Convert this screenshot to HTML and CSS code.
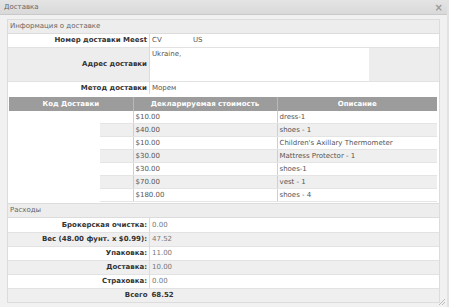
FILE: index.html
```html
<!DOCTYPE html>
<html lang="ru">
<head>
    <meta charset="UTF-8">
    <title>Доставка</title>
    <link rel="stylesheet" href="styles.css">
</head>
<body>
    <div class="dialog">
        <div class="titlebar">
            <span class="title">Доставка</span>
            <span class="close">&#215;</span>
        </div>
        <div class="content">
            <div class="panel">
                <div class="legend">Информация о доставке</div>
                <table class="info">
                    <tr class="row-num">
                        <th>Номер доставки Meest</th>
                        <td><span class="cv">CV</span>US</td>
                    </tr>
                    <tr class="row-addr">
                        <th>Адрес доставки</th>
                        <td><div class="addr-box">Ukraine,</div></td>
                    </tr>
                    <tr class="row-method">
                        <th>Метод доставки</th>
                        <td>Морем</td>
                    </tr>
                </table>

                <div class="items-wrap">
                    <table class="items">
                        <colgroup>
                            <col class="c0"><col class="c1"><col class="c2"><col class="c3">
                        </colgroup>
                        <tr>
                            <th colspan="2">Код Доставки</th>
                            <th>Декларируемая стоимость</th>
                            <th>Описание</th>
                        </tr>
                        <tr>
                            <td class="code" rowspan="7"></td>
                            <td class="gap"></td><td>$10.00</td><td>dress-1</td>
                        </tr>
                        <tr class="alt"><td class="gap"></td><td>$40.00</td><td>shoes - 1</td></tr>
                        <tr><td class="gap"></td><td>$10.00</td><td>Children's Axillary Thermometer</td></tr>
                        <tr class="alt"><td class="gap"></td><td>$30.00</td><td>Mattress Protector - 1</td></tr>
                        <tr><td class="gap"></td><td>$30.00</td><td>shoes-1</td></tr>
                        <tr class="alt"><td class="gap"></td><td>$70.00</td><td>vest - 1</td></tr>
                        <tr><td class="gap"></td><td>$180.00</td><td>shoes - 4</td></tr>
                    </table>
                </div>

                <div class="legend legend-costs">Расходы</div>
                <table class="costs">
                    <tr><th>Брокерская очистка:</th><td>0.00</td></tr>
                    <tr class="alt"><th>Вес (48.00 фунт. x $0.99):</th><td>47.52</td></tr>
                    <tr><th>Упаковка:</th><td>11.00</td></tr>
                    <tr class="alt"><th>Доставка:</th><td>10.00</td></tr>
                    <tr><th>Страховка:</th><td>0.00</td></tr>
                    <tr class="alt total"><th>Всего</th><td>68.52</td></tr>
                </table>
            </div>
        </div>
        <div class="grip"></div>
    </div>
</body>
</html>
```

FILE: styles.css
```css
body {
    margin: 0;
    font-family: 'DejaVu Sans', Verdana, sans-serif;
    font-size: 7px;
    color: #555;
    background-color: #f1f1f1;
}
.dialog {
    position: relative;
    width: 449px;
    height: 307px;
    box-sizing: border-box;
    border-right: 2px solid #e2e2e2;
    background-color: #f1f1f1;
}
.titlebar {
    height: 14px;
    display: flex;
    align-items: center;
    justify-content: space-between;
    padding: 0 4px 0 4px;
    background: linear-gradient(#e4e4e4, #d9d9d9);
    border-bottom: 1px solid #c9c9c9;
    color: #666;
}
.close {
    font-size: 10px;
    color: #999;
    font-weight: bold;
}
.content {
    padding: 4px 7px 0 7px;
}
.panel {
    border: 1px solid #dcdcdc;
    background-color: #fff;
}
.legend {
    height: 13px;
    line-height: 13px;
    padding-left: 2px;
    background-color: #ededed;
    border-bottom: 1px solid #dcdcdc;
    color: #666;
}
.legend-costs {
    border-top: 1px solid #dcdcdc;
}
table {
    border-collapse: collapse;
    width: 100%;
}
.info th,
.costs th {
    width: 139px;
    text-align: right;
    padding: 0 2px 0 0;
    color: #333;
    font-weight: bold;
    border-right: 1px solid #dcdcdc;
    white-space: nowrap;
}
.info td,
.costs td {
    padding: 0 0 0 2px;
}
.costs td {
    color: #777;
}
.info tr {
    height: 13px;
    border-bottom: 1px solid #e2e2e2;
}
.cv {
    display: inline-block;
    width: 41px;
}
.row-addr {
    background-color: #ededed;
}
.row-addr td {
    padding: 0;
    vertical-align: top;
}
.addr-box {
    width: 219px;
    height: 33px;
    padding: 2px 0 0 2px;
    box-sizing: border-box;
    background-color: #fff;
}
.row-method {
    border-bottom: none !important;
}
.items-wrap {
    padding: 3px 2px 1px 1px;
}
.items {
    table-layout: fixed;
}
.items .c0 { width: 91px; }
.items .c1 { width: 33px; }
.items .c2 { width: 144px; }
.items .c3 { width: 160px; }
.items th {
    height: 14px;
    padding: 0;
    background-color: #9c9c9c;
    color: #fff;
    font-weight: bold;
    border-right: 1px solid #b8b8b8;
}
.items th:last-child {
    border-right: none;
}
.items td {
    height: 12px;
    padding: 0 0 0 2px;
    border-bottom: 1px solid #e4e4e4;
    white-space: nowrap;
}
.items td.code {
    background-color: #fff;
    border-bottom: none;
}
.items td.gap {
    padding: 0;
    border-right: 1px solid #cfcfcf;
}
.items td:last-child {
    border-left: 1px solid #cfcfcf;
}
.items tr.alt td {
    background-color: #efefef;
}
.costs tr {
    height: 14px;
    border-bottom: 1px solid #e2e2e2;
}
.costs tr:last-child {
    border-bottom: none;
}
.costs tr.alt {
    background-color: #efefef;
}
.costs .total td {
    font-weight: bold;
    color: #333;
}
.costs .total th {
    border-right: none;
}
.grip {
    position: absolute;
    right: 2px;
    bottom: 2px;
    width: 6px;
    height: 6px;
    background: linear-gradient(135deg, transparent 45%, #bbb 45%, #bbb 55%, transparent 55%, transparent 70%, #bbb 70%, #bbb 80%, transparent 80%);
}
```
